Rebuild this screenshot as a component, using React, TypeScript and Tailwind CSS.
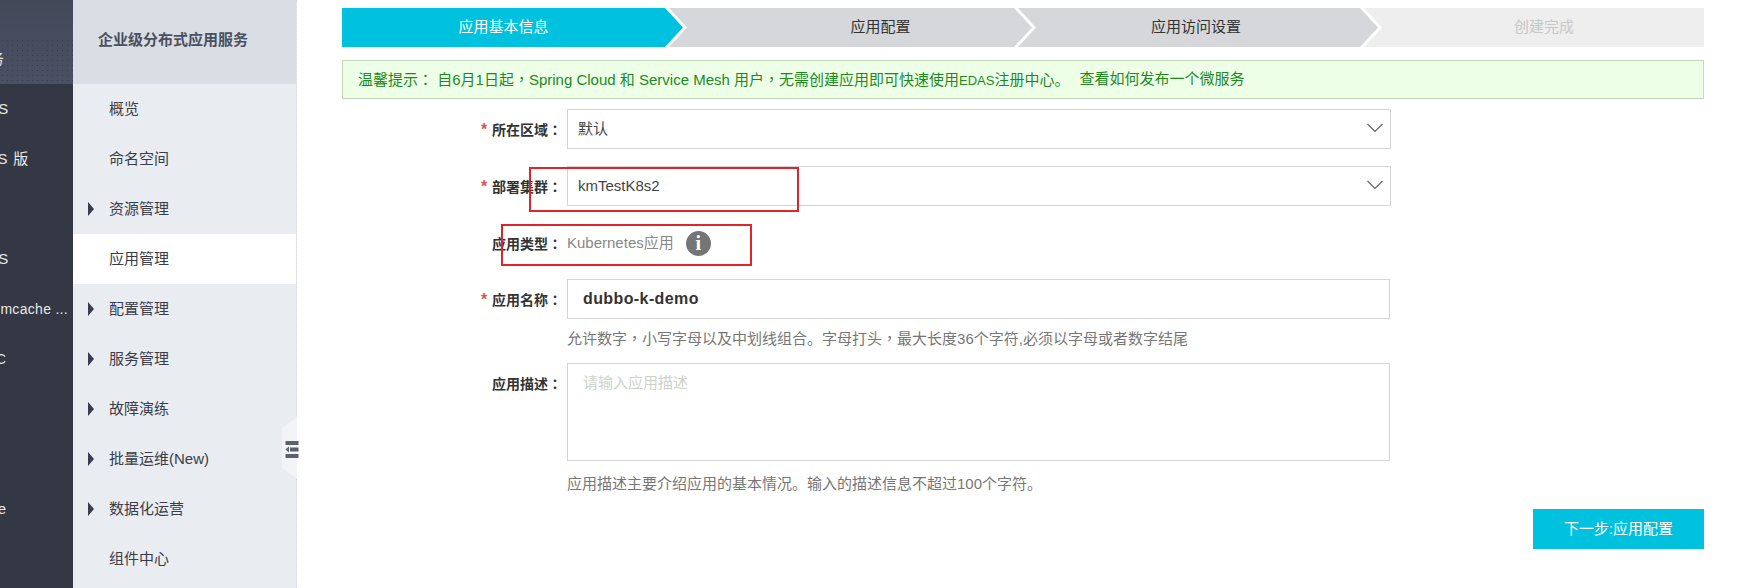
import React from 'react';

const cjk = "font-['Liberation_Sans','Noto_Sans_CJK_SC',sans-serif]";

// first column is cut off by the left window edge, so text is pushed out to the left
const darkRows = [
  { text: 'ECS', box: 'w-[9px] tracking-[0.8px]' },
  { text: '容器服务 K8S 版', box: 'w-[29px] tracking-[0.8px]' },
  { text: '', box: 'w-[8px]' },
  { text: 'EDAS', box: 'w-[9px] tracking-[0.8px]' },
  { text: 'memcache ...', box: 'w-[68px] text-[14px] tracking-[0.3px]' },
  { text: 'RPC', box: 'w-[7px] tracking-[0.8px]' },
  { text: '', box: 'w-[8px]' },
  { text: '', box: 'w-[8px]' },
  { text: 'Cache', box: 'w-[7px] tracking-[0.8px]' },
  { text: '', box: 'w-[8px]' },
];

const menu = [
  { label: '概览' },
  { label: '命名空间' },
  { label: '资源管理', arrow: true },
  { label: '应用管理', active: true },
  { label: '配置管理', arrow: true },
  { label: '服务管理', arrow: true },
  { label: '故障演练', arrow: true },
  { label: '批量运维(New)', arrow: true },
  { label: '数据化运营', arrow: true },
  { label: '组件中心' },
];

// TC face centres the full width colon and comma, like the reference
const Punct: React.FC<{ c: string }> = ({ c }) => <span className="font-['Noto_Sans_CJK_TC',sans-serif]">{c}</span>;

const Star = () => <span className="absolute left-[-11px] top-[3px] text-[#d9534f] text-[16px] font-bold leading-[16px]">*</span>;

const Label: React.FC<{ text: string; required?: boolean }> = ({ text, required }) => (
  <label className="relative w-[70px] shrink-0 mr-[5px] text-[14px] font-bold text-[#333] whitespace-nowrap leading-[20px]">
    {required && <Star />}
    {text}
    <Punct c="：" />
  </label>
);

const Chevron = () => (
  <svg width="16" height="10" viewBox="0 0 16 10" className="absolute right-[7px] top-[13px]">
    <path d="M0.5 1 L8 8.5 L15.5 1" fill="none" stroke="#666" strokeWidth="1.2" />
  </svg>
);

const SelectBox: React.FC<{ value: string }> = ({ value }) => (
  <div className="relative flex-1 mr-[-1px] h-[40px] border border-[#d5d5d5] flex items-center pl-[10px] text-[15px] text-[#444]">
    {value}
    <Chevron />
  </div>
);

export default function App() {
  return (
    <div className={`relative flex w-[1737px] h-[588px] overflow-hidden bg-white ${cjk}`}>
      <aside className="w-[73px] shrink-0 bg-[#343744] text-[#e8e8ea] text-[15px] overflow-hidden">
        <div className="relative h-[84px] bg-gradient-to-b from-[#434859] to-[#4b5164]">
          <div className="absolute inset-x-0 bottom-0 h-[46px] bg-[radial-gradient(#3a3e4e_0.7px,transparent_0.9px)] bg-[length:5px_5px]" />
          <div className="absolute left-0 top-[49px] w-[4px] flex justify-end whitespace-nowrap leading-[20px]">服务</div>
        </div>
        {darkRows.map((r, i) => (
          <div key={i} className="h-[50px] flex items-center">
            <div className={`flex justify-end whitespace-nowrap ${r.box}`}>{r.text}</div>
          </div>
        ))}
      </aside>

      <nav className="relative w-[224px] shrink-0 bg-[#e9ecf1] border-r border-dotted border-[#d5d8de]">
        <div className="h-[84px] bg-[#d9dde4] flex items-center pl-[25px] pb-[4px] text-[15px] font-bold text-[#4a5060]">
          企业级分布式应用服务
        </div>
        {menu.map((m) => (
          <div
            key={m.label}
            className={`h-[50px] flex items-center pl-[36px] text-[15px] text-[#3a3d48] ${m.active ? 'bg-white' : ''}`}
          >
            {m.arrow && (
              <span className="absolute left-[15px] w-0 h-0 border-y-[7px] border-y-transparent border-l-[6px] border-l-[#373d4d]" />
            )}
            {m.label}
          </div>
        ))}
        <div className="absolute left-[209px] top-[417px] w-[15px] h-[62px] bg-[#f3f4f5] [clip-path:polygon(100%_0,0_18%,0_82%,100%_100%)]" />
        <svg width="14" height="17" viewBox="0 0 14 17" className="absolute left-[212px] top-[441px]">
          <rect x="0.5" y="0" width="13" height="4" fill="#5b5f6e" />
          <rect x="5" y="6.5" width="8.5" height="4" fill="#5b5f6e" />
          <path d="M0.5 8.5 L4 5.5 V11.5 Z" fill="#5b5f6e" />
          <rect x="0.5" y="13" width="13" height="4" fill="#5b5f6e" />
        </svg>
      </nav>

      <main className="flex-1 pl-[45px] pr-[33px] pt-[8px]">
        <div className="flex h-[39px] text-[15px]">
          <div className="w-[341px] shrink-0 flex items-center justify-center pr-[18px] bg-[#00c1de] text-white [clip-path:polygon(0_0,calc(100%-18px)_0,100%_50%,calc(100%-18px)_100%,0_100%)]">
            应用基本信息
          </div>
          <div className="w-[363px] shrink-0 ml-[-14px] flex items-center justify-center pl-[60px] bg-[#d5d7da] text-[#333] [clip-path:polygon(0_0,calc(100%-18px)_0,100%_50%,calc(100%-18px)_100%,0_100%,18px_50%)]">
            应用配置
          </div>
          <div className="w-[360px] shrink-0 ml-[-14px] flex items-center justify-center pr-[4px] bg-[#d5d7da] text-[#333] [clip-path:polygon(0_0,calc(100%-18px)_0,100%_50%,calc(100%-18px)_100%,0_100%,18px_50%)]">
            应用访问设置
          </div>
          <div className="flex-1 ml-[-14px] flex items-center justify-center pl-[20px] bg-[#eeeeee] text-[#c8c8c8] [clip-path:polygon(0_0,100%_0,100%_100%,0_100%,18px_50%)]">
            创建完成
          </div>
        </div>

        <div className="mt-[13px] h-[39px] border border-[#c6d8bc] bg-[#eeffe8] flex items-center pl-[15px] text-[15px] text-[#1d8a1d] whitespace-nowrap">
          <span>
            温馨提示<Punct c="：" /> 自6月1日起<Punct c="，" />Spring Cloud 和 Service Mesh 用户<Punct c="，" />无需创建应用即可快速使用<span className="text-[13px]">EDAS</span>注册中心。
          </span>
          <span className="ml-[10px]">查看如何发布一个微服务</span>
        </div>

        <form className="mt-[10px] pl-[150px] pr-[314px]">
          <div className="flex items-center">
            <Label text="所在区域" required />
            <SelectBox value="默认" />
          </div>
          <div className="flex items-center mt-[17px]">
            <Label text="部署集群" required />
            <SelectBox value="kmTestK8s2" />
          </div>
          <div className="flex items-center h-[40px] mt-[17px]">
            <Label text="应用类型" />
            <span className="text-[15px] text-[#888]">Kubernetes应用</span>
            <span className="ml-[12px] w-[25px] h-[25px] rounded-full bg-[#757575] flex items-center justify-center text-white text-[20px] font-bold font-['Liberation_Serif',serif]">
              i
            </span>
          </div>
          <div className="flex items-center mt-[16px]">
            <Label text="应用名称" required />
            <div className="flex-1 h-[40px] border border-[#d5d5d5] flex items-center pl-[15px] text-[16px] font-bold tracking-[0.4px] text-[#333]">
              dubbo-k-demo
            </div>
          </div>
          <p className="ml-[75px] mt-[9px] h-[20px] text-[15px] leading-[20px] text-[#777] whitespace-nowrap">
            允许数字<Punct c="，" />小写字母以及中划线组合。字母打头<Punct c="，" />最大长度36个字符,必须以字母或者数字结尾
          </p>
          <div className="flex items-start mt-[15px]">
            <div className="pt-[9px]">
              <Label text="应用描述" />
            </div>
            <div className="flex-1 h-[98px] border border-[#d5d5d5] pl-[15px] pt-[9px] text-[15px] leading-[20px] text-[#cdd3c8]">
              请输入应用描述
            </div>
          </div>
          <p className="ml-[75px] mt-[13px] h-[20px] text-[15px] leading-[20px] text-[#777] whitespace-nowrap">
            应用描述主要介绍应用的基本情况。输入的描述信息不超过100个字符。
          </p>
        </form>

        <div className="flex justify-end mt-[15px]">
          <button className="w-[171px] h-[40px] bg-[#00c1de] text-white text-[15px]">下一步:应用配置</button>
        </div>
      </main>

      {/* red marks drawn over the screenshot */}
      <div className="absolute left-[529px] top-[167px] w-[270px] h-[45px] border-2 border-[#e0242a]" />
      <div className="absolute left-[501px] top-[224px] w-[251px] h-[42px] border-2 border-[#e0242a]" />
    </div>
  );
}
